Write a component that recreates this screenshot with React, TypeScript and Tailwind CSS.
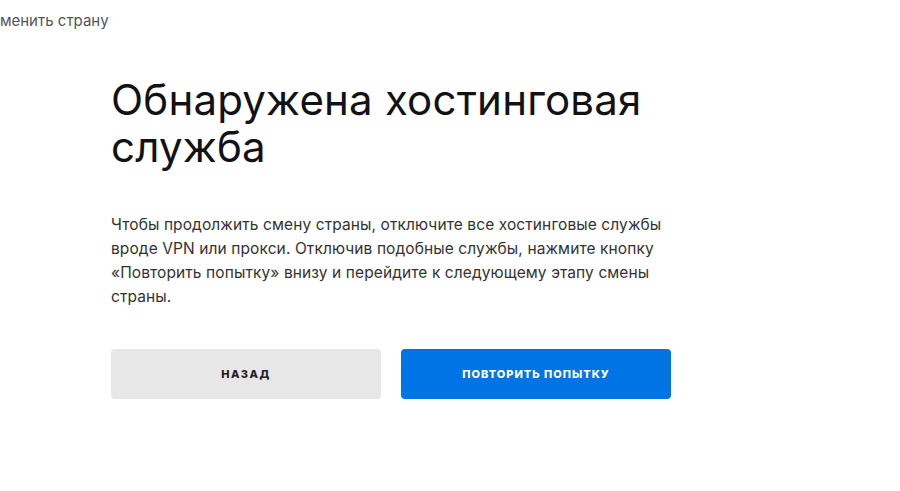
export default function App() {
  return (
    <main
      className="w-[900px] h-[491px] bg-white overflow-hidden"
      style={{ fontFamily: "Inter, 'Noto Sans', sans-serif" }}
    >
      {/* back link, cut off at the left edge */}
      <div className="pt-[11px] overflow-hidden">
        <a className="block ml-[-11px] text-[15px] leading-[20px] text-[#555]">
          Сменить страну
        </a>
      </div>

      <section className="pl-[111px] pt-[45px] w-[700px]">
        <h1 className="text-[42px] leading-[47px] font-normal text-[#121212] tracking-[0.2px]">
          Обнаружена хостинговая
          <br />
          служба
        </h1>
        <p className="mt-[43px] w-[560px] text-[15.5px] leading-[24px] text-[#333] tracking-[0.1px]">
          Чтобы продолжить смену страны, отключите все хостинговые службы
          вроде VPN или прокси. Отключив подобные службы, нажмите кнопку
          «Повторить попытку» внизу и перейдите к следующему этапу смены
          страны.
        </p>
        <div className="mt-[40px] flex gap-[20px]">
          <button className="w-[270px] h-[50px] rounded-[4px] bg-[#e7e7e7] text-[#202020] text-[11px] font-extrabold tracking-[1.5px] uppercase">
            Назад
          </button>
          <button className="w-[270px] h-[50px] rounded-[4px] bg-[#0074e4] text-white text-[11px] font-extrabold tracking-[1px] uppercase">
            Повторить попытку
          </button>
        </div>
      </section>
    </main>
  );
}
